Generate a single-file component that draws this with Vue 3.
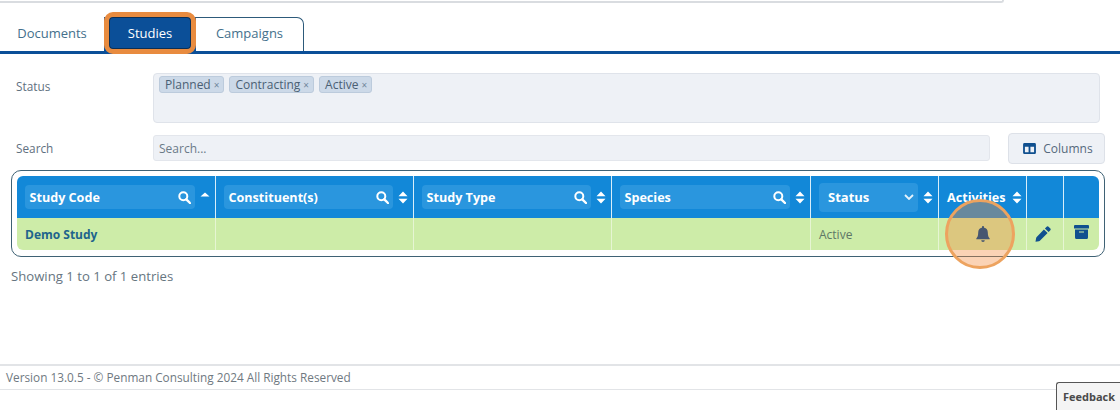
<script setup>
const tags = ['Planned', 'Contracting', 'Active']
const cols = [
  { name: 'Study Code', w: 199, filter: 'search', sort: 'up' },
  { name: 'Constituent(s)', w: 198, filter: 'search', sort: 'both' },
  { name: 'Study Type', w: 198, filter: 'search', sort: 'both' },
  { name: 'Species', w: 199, filter: 'search', sort: 'both' },
  { name: 'Status', w: 128, filter: 'select', sort: 'both' },
  { name: 'Activities', w: 88, filter: 'plain', sort: 'both' },
  { name: '', w: 37, filter: 'none', sort: '' },
  { name: '', w: 35, filter: 'none', sort: '' }
]
</script>

<template>
  <div class="page">
    <div class="topfield"></div>
    <nav class="tabs">
      <a class="tab first">Documents</a>
      <a class="tab active">Studies</a>
      <a class="tab last">Campaigns</a>
      <span class="tab-ring"></span>
    </nav>

    <section class="filters">
      <div class="row status-row">
        <label class="lbl">Status</label>
        <div class="tagbox">
          <span v-for="t in tags" :key="t" class="tag">{{ t }}<i>×</i></span>
        </div>
      </div>
      <div class="row search-row">
        <label class="lbl">Search</label>
        <div class="search">Search...</div>
        <button class="colbtn">
          <svg width="13" height="11" viewBox="0 0 14 12"><path fill="#10508f" fill-rule="evenodd" d="M1.500 0h11A1.500 1.500 0 0 1 14 1.500v9a1.500 1.500 0 0 1-1.500 1.500h-11A1.500 1.500 0 0 1 0 10.500v-9A1.500 1.500 0 0 1 1.500 0zM2 4v6h4V4zm6 0v6h4V4z"/></svg>
          <span>Columns</span>
        </button>
      </div>
    </section>

    <div class="tablewrap">
      <div class="thead">
        <div v-for="(c, i) in cols" :key="i" class="th" :class="'f-' + c.filter" :style="{ width: c.w + 'px' }">
          <div v-if="c.filter === 'search' || c.filter === 'select'" class="filter">
            <span>{{ c.name }}</span>
            <svg v-if="c.filter === 'search'" width="13" height="13" viewBox="0 0 13 13"><circle cx="5.300" cy="5.300" r="4" fill="none" stroke="#fff" stroke-width="2"/><path d="M8.300 8.300 12 12" stroke="#fff" stroke-width="2.400" stroke-linecap="round"/></svg>
            <svg v-else width="10" height="6" viewBox="0 0 10 6"><path d="M1 1l4 4 4-4" fill="none" stroke="#e6f3fc" stroke-width="1.800"/></svg>
          </div>
          <span v-else-if="c.filter === 'plain'" class="plain">{{ c.name }}</span>
          <svg v-if="c.sort === 'up'" class="sort" width="10" height="13" viewBox="0 0 10 13"><path d="M5 1.500 9.500 5.500H.5z" fill="#fff"/></svg>
          <svg v-if="c.sort === 'both'" class="sort" width="10" height="13" viewBox="0 0 10 13"><path d="M5 .5 9.500 5.300H.5zM5 12.500.5 7.700h9z" fill="#fff"/></svg>
        </div>
      </div>
      <div class="tbody">
        <div class="td" style="width:199px"><a class="code">Demo Study</a></div>
        <div class="td" style="width:198px"></div>
        <div class="td" style="width:198px"></div>
        <div class="td" style="width:199px"></div>
        <div class="td" style="width:128px"><span class="stat">Active</span></div>
        <div class="td center" style="width:88px">
          <svg class="bell" width="14" height="16" viewBox="0 0 14 16"><path fill="#465670" d="M7 0a1.100 1.100 0 0 1 1.100 1.100v.7A4.700 4.700 0 0 1 11.800 6.400c0 3.600.9 4.900 1.900 6v.9H.3v-.9c1-1.100 1.900-2.400 1.900-6A4.700 4.700 0 0 1 5.900 1.800v-.7A1.100 1.100 0 0 1 7 0zM5.200 14.200h3.600A1.800 1.800 0 0 1 7 16a1.800 1.800 0 0 1-1.800-1.800z"/></svg>
        </div>
        <div class="td center pencil" style="width:37px">
          <svg width="16" height="16" viewBox="0 0 16 16"><path fill="#10508f" d="M11.400.9a1.700 1.700 0 0 1 2.400 0l1.300 1.300a1.700 1.700 0 0 1 0 2.400l-1.500 1.500-3.700-3.700zM8.900 3.400l3.700 3.700-7.500 7.500c-.3.300-.7.500-1.100.6L.5 15.800l.6-3.600c.1-.4.300-.8.600-1.100z"/></svg>
        </div>
        <div class="td center archive" style="width:35px">
          <svg width="15" height="14" viewBox="0 0 15 14"><path fill="#10508f" fill-rule="evenodd" d="M1 0h13a1 1 0 0 1 1 1v2a.5.500 0 0 1-.5.500H.5A.5.500 0 0 1 0 3V1a1 1 0 0 1 1-1zM1 4.500h13V12.500A1.500 1.500 0 0 1 12.500 14h-10A1.500 1.500 0 0 1 1 12.500zM5 6.500v1h5v-1z"/></svg>
        </div>
      </div>
      <div class="marker"></div>
    </div>

    <p class="info">Showing 1 to 1 of 1 entries</p>

    <footer class="foot">Version 13.0.5 - © Penman Consulting 2024 All Rights Reserved</footer>
    <div class="feedback">Feedback</div>
  </div>
</template>

<style>
html, body { margin: 0; background: #fff; overflow: hidden; }
</style>

<style scoped>
.page {
  position: relative;
  width: 1120px;
  height: 410px;
  overflow: hidden;
  background: #fff;
  font-family: "Open Sans", "Liberation Sans", sans-serif;
  color: #55677a;
  font-size: 12.500px;
}
.topfield {
  width: 1004px;
  height: 3px;
  box-sizing: border-box;
  border-bottom: 2px solid #d9dce0;
  border-right: 2px solid #d9dce0;
  border-bottom-right-radius: 3px;
}
.tabs {
  position: relative;
  display: flex;
  margin-top: 14px;
  height: 34px;
  border-bottom: 3px solid #0b4f98;
}
.tab {
  display: flex;
  align-items: center;
  justify-content: center;
  font-size: 13px;
  color: #44708c;
  box-sizing: border-box;
  height: 34px;
  padding-bottom: 2px;
}
.tab.first { width: 104px; }
.tab.active {
  width: 92px;
  background: #0b4f98;
  color: #fff;
}
.tab.last {
  width: 108px;
  padding-bottom: 3px;
  border: 1px solid #2d5a7a;
  border-bottom: 0;
  border-left: 0;
  border-radius: 0 7px 0 0;
}
.tab-ring {
  position: absolute;
  left: 104px;
  top: -5px;
  width: 92px;
  height: 42px;
  box-sizing: border-box;
  border: 5px solid #e88b3f;
  border-radius: 9px;
  box-shadow: inset 0 0 0 1px #0b2f55;
}
.filters { padding: 19px 15px 0 16px; }
.row { display: flex; }
.lbl { width: 137px; font-size: 11.800px; color: #5f7080; }
.status-row { height: 50px; }
.status-row .lbl { padding-top: 5px; }
.tagbox {
  width: 947px;
  height: 50px;
  box-sizing: border-box;
  display: flex;
  align-items: flex-start;
  gap: 5px;
  padding: 2px 5px;
  background: #eef1f6;
  border: 1px solid #dfe3ea;
  border-radius: 4px;
}
.tag {
  height: 17px;
  line-height: 16px;
  box-sizing: border-box;
  padding: 0 4px 0 5px;
  background: #ccd9e8;
  border: 1px solid #bccbdc;
  border-radius: 3px;
  font-size: 12px;
  color: #4a6074;
}
.tag i { font-style: normal; font-size: 10px; color: #71879c; margin-left: 3px; }
.search-row { margin-top: 9px; height: 32px; align-items: center; }
.search {
  width: 837px;
  height: 26px;
  line-height: 25px;
  margin-right: 18px;
  box-sizing: border-box;
  padding-left: 5px;
  background: #eef1f6;
  border: 1px solid #e3e6ec;
  border-radius: 3px;
  font-size: 12px;
  color: #6b7a88;
}
.colbtn {
  width: 97px;
  height: 31px;
  display: flex;
  align-items: center;
  justify-content: center;
  gap: 7px;
  padding: 0 0 0 3px;
  background: #eef1f6;
  border: 1px solid #dde1e8;
  border-radius: 4px;
  font: 12px "Open Sans", sans-serif;
  color: #55697c;
}
.tablewrap {
  position: relative;
  margin: 6px 0 0 11px;
  width: 1094px;
  height: 87px;
  box-sizing: border-box;
  border: 1px solid #3f6275;
  border-radius: 10px;
  padding: 5px;
}
.thead, .tbody { display: flex; }
.thead {
  height: 42px;
  background: #1288d8;
  border-radius: 6px 6px 0 0;
  overflow: hidden;
}
.th {
  display: flex;
  align-items: center;
  box-sizing: border-box;
  padding: 0 5px 0 8px;
  border-right: 1px solid #d8eefa;
  color: #fff;
  font-weight: 700;
  font-size: 12.600px;
}
.th:last-child, .td:last-child { border-right: 0; }
.filter {
  flex: 1;
  height: 24px;
  display: flex;
  align-items: center;
  justify-content: space-between;
  background: #2a96de;
  border-radius: 4px;
  padding: 0 4px 0 4.500px;
  margin-right: 5px;
  min-width: 0;
}
.f-select .filter { height: 29px; padding: 0 4px 0 9px; font-size: 13px; }
.f-plain .sort { margin-left: 1px; }
.plain { margin-right: 5px; }
.sort { flex: none; }
.tbody {
  height: 32px;
  background: #cdeca8;
  border-radius: 0 0 6px 6px;
  overflow: hidden;
}
.td {
  display: flex;
  align-items: center;
  box-sizing: border-box;
  padding-left: 8px;
  border-right: 1px solid #e6f5d3;
  font-size: 12px;
}
.td.center { justify-content: center; padding: 0; }
.td.pencil { padding-right: 5px; }
.td.archive { padding-bottom: 5px; }
.bell { position: relative; z-index: 1; }
.code { font-weight: 700; color: #20648c; }
.stat { color: #5e7767; }
.marker {
  position: absolute;
  left: 933px;
  top: 28px;
  width: 70px;
  height: 70px;
  box-sizing: border-box;
  border: 3px solid #eda35f;
  border-radius: 50%;
  background: rgba(245, 140, 60, 0.38);
}
.info { margin: 10px 0 0 11px; font-size: 13.150px; line-height: 18px; color: #66757f; }
.foot {
  position: absolute;
  left: 0;
  right: 0;
  top: 364px;
  height: 26px;
  line-height: 23px;
  box-sizing: border-box;
  padding-left: 6px;
  border-top: 2px solid #e2e4e7;
  border-bottom: 1px solid #e2e4e7;
  font-size: 11.800px;
  color: #6f7981;
}
.feedback {
  position: absolute;
  left: 1056px;
  top: 382px;
  width: 64px;
  height: 28px;
  box-sizing: border-box;
  padding: 6px 0 0 6px;
  background: #f4f4f4;
  border-top: 1px solid #555;
  border-left: 1px solid #555;
  border-radius: 3px 0 0 0;
  font-size: 11px;
  font-weight: 700;
  color: #4a4a4a;
}
</style>
